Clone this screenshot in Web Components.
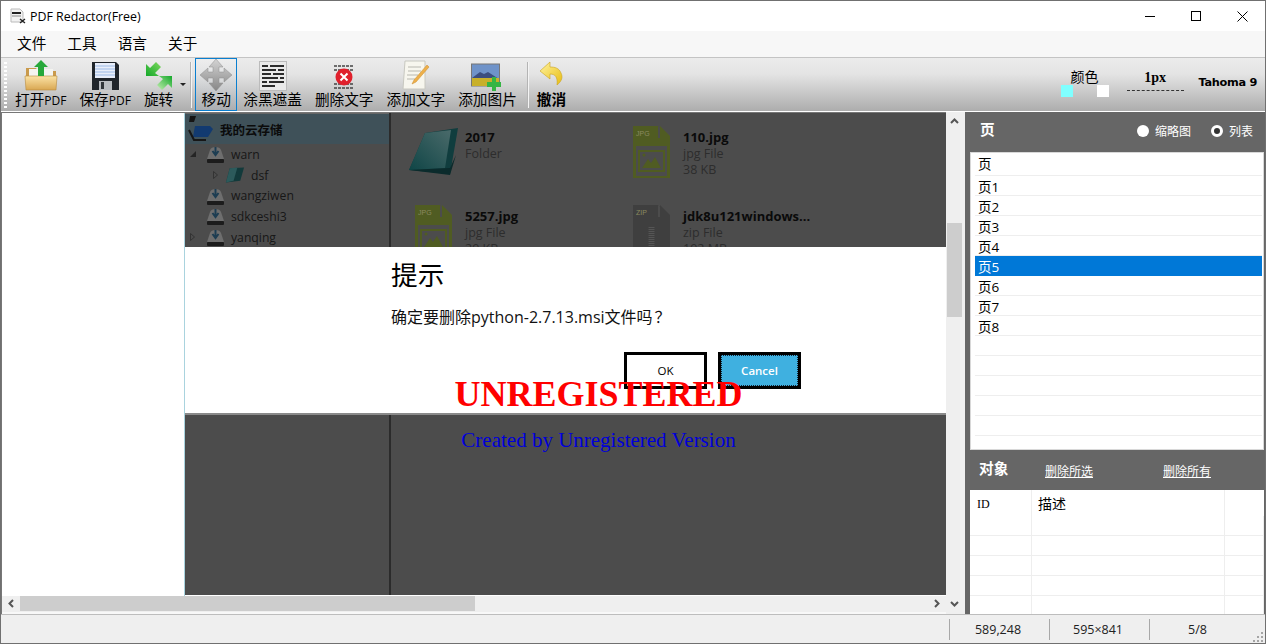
<!DOCTYPE html>
<html lang="zh">
<head>
<meta charset="utf-8">
<title>PDF Redactor(Free)</title>
<style>
  html, body { margin: 0; padding: 0; background: #efefef; overflow: hidden; }
  body { font-family: "Open Sans", "Noto Sans CJK SC", sans-serif; }
</style>
</head>
<body>
<pdf-window>
  <title-bar slot="title"></title-bar>
  <menu-bar slot="menu"></menu-bar>
  <tool-bar slot="tools">
    <tool-button label="打开" small="PDF">
      <svg width="34" height="31" viewBox="0 0 34 31">
        <defs><linearGradient id="fo" x1="0" y1="0" x2="0" y2="1"><stop offset="0" stop-color="#fbe3a6"/><stop offset="1" stop-color="#d9a752"/></linearGradient></defs>
        <path d="M2 8h10l2 3h18v19H2z" fill="#c99a4c"/>
        <rect x="5" y="9" width="24" height="10" fill="#f4f4f0"/>
        <path d="M1 16h32l-1 14H2z" fill="url(#fo)" stroke="#b98c3e" stroke-width=".6"/>
        <path d="M17 0l7 7h-4v9h-6V7h-4z" fill="#27a83a"/>
      </svg>
    </tool-button>
    <tool-button label="保存" small="PDF">
      <svg width="28" height="30" viewBox="0 0 28 30">
        <path d="M1 1h24l3 3v25H1z" fill="#20252b"/>
        <rect x="4" y="2" width="20" height="15" fill="#e8eefa"/>
        <path d="M4 5h20M4 8h20M4 11h20M4 14h20" stroke="#9cb9e6" stroke-width="1.2"/>
        <rect x="8" y="20" width="13" height="9" fill="#b9bdc2"/>
        <rect x="10" y="21" width="3" height="7" fill="#30353a"/>
      </svg>
    </tool-button>
    <tool-button label="旋转">
      <svg width="28" height="30" viewBox="0 0 28 30">
        <defs>
          <linearGradient id="g1" x1="0" y1="1" x2="1" y2="0"><stop offset="0" stop-color="#14a82a"/><stop offset="1" stop-color="#7ed85e"/></linearGradient>
          <linearGradient id="g2" x1="1" y1="0" x2="0" y2="1"><stop offset="0" stop-color="#14a82a"/><stop offset="1" stop-color="#c4efb0"/></linearGradient>
        </defs>
        <path d="M1 15V3l4 4 6-6 5 5-6 6 4 3z" fill="url(#g1)"/>
        <path d="M27 15v12l-4-4-6 6-5-5 6-6-4-3z" fill="url(#g2)"/>
      </svg>
    </tool-button>
    <drop-caret></drop-caret>
    <tool-separator></tool-separator>
    <tool-button label="移动" active>
      <svg width="32" height="32" viewBox="0 0 32 32">
        <defs><linearGradient id="mv" x1="0" y1="0" x2="0" y2="1"><stop offset="0" stop-color="#d4d4d4"/><stop offset="1" stop-color="#868686"/></linearGradient></defs>
        <path d="M16 0l7 8h-4v5h5V9l8 7-8 7v-4h-5v5h4l-7 8-7-8h4v-5H8v4l-8-7 8-7v4h5V8H9z" fill="url(#mv)" stroke="#8e8e8e" stroke-width=".5"/>
      </svg>
    </tool-button>
    <tool-button label="涂黑遮盖">
      <svg width="28" height="30" viewBox="0 0 28 30">
        <rect x=".5" y=".5" width="27" height="29" fill="#e9e9e9" stroke="#bbb"/>
        <path d="M3 5h6M11 5h14M3 9h14M19 9h6M3 13h9M14 13h11M3 17h16M21 17h4M3 21h5M10 21h15M3 25h13" stroke="#2b2b2b" stroke-width="2"/>
      </svg>
    </tool-button>
    <tool-button label="删除文字">
      <svg width="24" height="28" viewBox="0 0 24 28">
        <path d="M2 3h20M2 7h20M2 21h20M2 25h20" stroke="#444" stroke-width="1.6" stroke-dasharray="3 1"/>
        <circle cx="12" cy="14" r="8.500" fill="#e0202c"/>
        <path d="M8.500 10.500l7 7M15.500 10.500l-7 7" stroke="#fff" stroke-width="2"/>
      </svg>
    </tool-button>
    <tool-button label="添加文字">
      <svg width="28" height="32" viewBox="0 0 28 32">
        <path d="M3 2h20v28H1z" fill="#f7f6ee" stroke="#c8c8c0"/>
        <path d="M6 8h13M6 12h13M5 16h11M5 20h8" stroke="#b8b8b0"/>
        <path d="M25 6l2 2-13 15-4 2 2-4z" fill="#eeb04a" stroke="#c98a2a" stroke-width=".5"/>
      </svg>
    </tool-button>
    <tool-button label="添加图片">
      <svg width="32" height="28" viewBox="0 0 32 28">
        <rect x=".5" y="1" width="28" height="22" fill="#6f93c9" stroke="#777"/>
        <path d="M1 15l8-6 4 2 4-2 11 7v5H1z" fill="#3c4e7e"/>
        <rect x="1" y="15" width="27" height="8" fill="#c8b02a"/>
        <path d="M21 14h4v5h5v5h-5v4h-4v-4h-5v-5h5z" fill="#35b544"/>
      </svg>
    </tool-button>
    <tool-separator wide></tool-separator>
    <tool-button label="撤消" bold>
      <svg width="24" height="30" viewBox="0 0 24 30">
        <defs><linearGradient id="un" x1="0" y1="0" x2="1" y2="1"><stop offset="0" stop-color="#fff3a0"/><stop offset="1" stop-color="#e8bd10"/></linearGradient></defs>
        <path d="M11 1L1 10l10 8v-5c5 0 8 3 7 11 5-4 6-8 4-12-2-5-6-6-11-6z" fill="url(#un)" stroke="#c9a21e" stroke-width=".6"/>
      </svg>
    </tool-button>
    <tool-options slot="options"></tool-options>
  </tool-bar>
  <doc-view slot="doc">
    <explorer-tree>
      <tree-row level="0" arrow="open" name="warn"></tree-row>
      <tree-row level="1" arrow="closed" name="dsf" folder></tree-row>
      <tree-row level="0" name="wangziwen"></tree-row>
      <tree-row level="0" name="sdkceshi3"></tree-row>
      <tree-row level="0" arrow="closed" name="yanqing"></tree-row>
    </explorer-tree>
    <file-grid>
      <file-tile kind="folder" name="2017" type="Folder"></file-tile>
      <file-tile kind="jpg" name="110.jpg" type="jpg File" size="38 KB"></file-tile>
      <file-tile kind="jpg" name="5257.jpg" type="jpg File" size="29 KB"></file-tile>
      <file-tile kind="zip" name="jdk8u121windows..." type="zip File" size="192 MB"></file-tile>
    </file-grid>
    <confirm-dialog slot="over"></confirm-dialog>
    <water-mark slot="over"></water-mark>
  </doc-view>
  <side-panel slot="side"></side-panel>
  <status-bar slot="status"></status-bar>
</pdf-window>

<script>
const CJK = `"Open Sans", "Noto Sans CJK SC", sans-serif`;

// Outer window frame
class PdfWindow extends HTMLElement {
  constructor() {
    super();
    this.attachShadow({ mode: 'open' });
    this.shadowRoot.innerHTML = `
      <style>
        :host {
          display: flex; flex-direction: column; box-sizing: border-box;
          width: 1266px; height: 644px; border: 1px solid #707070; background: #efefef;
          font-family: ${CJK}; color: #000;
        }
        .main { flex: 0 0 502px; display: flex; min-height: 0; }
      </style>
      <slot name="title"></slot>
      <slot name="menu"></slot>
      <slot name="tools"></slot>
      <div class="main"><slot name="doc"></slot><slot name="side"></slot></div>
      <slot name="status"></slot>
    `;
  }
}

class TitleBar extends HTMLElement {
  constructor() {
    super();
    this.attachShadow({ mode: 'open' });
    this.shadowRoot.innerHTML = `
      <style>
        :host { display: flex; align-items: center; height: 30px; background: #fff; flex: none; }
        .icon { margin: 0 4px 0 9px; display: block; }
        .text { font-size: 12.4px; flex: 1; }
        .btn { width: 46px; height: 30px; display: flex; align-items: center; justify-content: center; }
      </style>
      <svg class="icon" width="16" height="16" viewBox="0 0 16 16">
        <path d="M1 1h9l3 3v10H1z" fill="#f2f2f2" stroke="#bbb"/>
        <path d="M2 5h9" stroke="#222" stroke-width="2"/>
        <path d="M2 8h9" stroke="#888"/>
        <path d="M10 11l5 4M15 11l-5 4" stroke="#222" stroke-width="1.4"/>
      </svg>
      <span class="text">PDF Redactor(Free)</span>
      <span class="btn"><svg width="10" height="10"><path d="M0 5.500h10" stroke="#000"/></svg></span>
      <span class="btn"><svg width="10" height="10"><rect x=".5" y=".5" width="9" height="9" fill="none" stroke="#000"/></svg></span>
      <span class="btn"><svg width="11" height="11"><path d="M.5.5l10 10M10.500.5l-10 10" stroke="#000"/></svg></span>
    `;
  }
}

class MenuBar extends HTMLElement {
  constructor() {
    super();
    this.attachShadow({ mode: 'open' });
    const items = ['文件', '工具', '语言', '关于'];
    this.shadowRoot.innerHTML = `
      <style>
        :host {
          display: flex; align-items: center; gap: 21px; height: 26px; flex: none; box-sizing: content-box;
          padding: 0 0 0 16px; background: #f7f7f7; border-bottom: 1px solid #c4c4c4;
          font-size: 14.67px;
        }
        span { position: relative; top: -2px; }
      </style>
      ${items.map(i => `<span>${i}</span>`).join('')}
    `;
  }
}

class ToolBar extends HTMLElement {
  constructor() {
    super();
    this.attachShadow({ mode: 'open' });
    this.shadowRoot.innerHTML = `
      <style>
        :host {
          display: flex; align-items: stretch; height: 54px; flex: none; box-sizing: border-box;
          background: linear-gradient(#ececec 0%, #e4e4e4 30%, #adadad 100%);
          border-bottom: 1px solid #fff; padding-left: 3px;
        }
        .grip {
          width: 3px; margin: 4px 2px 3px 0;
          background: repeating-linear-gradient(#fff 0 2px, transparent 2px 4px);
        }
        ::slotted([slot="options"]) { margin-left: auto; }
      </style>
      <div class="grip"></div>
      <slot></slot>
      <slot name="options"></slot>
    `;
  }
}

// One toolbar button: icon on top, label below
class ToolButton extends HTMLElement {
  constructor() {
    super();
    this.attachShadow({ mode: 'open' });
  }

  connectedCallback() {
    const small = this.getAttribute('small');
    this.shadowRoot.innerHTML = `
      <style>
        :host {
          display: flex; flex-direction: column; align-items: center; box-sizing: border-box;
          padding: 0 5px; border: 1px solid transparent; height: 53px; margin-right: 1px;
        }
        :host([active]) {
          border-color: #0a7fd0; margin: 0; padding: 0 4px;
          background: linear-gradient(rgba(255,255,255,.12), rgba(150,170,190,.18));
        }
        :host([bold]) .label { font-weight: 700; }
        .icon { height: 31px; display: flex; align-items: flex-end; justify-content: center; margin-top: 1px; }
        .label { font-size: 14.67px; line-height: 17px; white-space: nowrap; }
        .small { font-size: 12px; }
      </style>
      <div class="icon"><slot></slot></div>
      <div class="label">${this.getAttribute('label')}${small ? `<span class="small">${small}</span>` : ''}</div>
    `;
  }
}

class DropCaret extends HTMLElement {
  constructor() {
    super();
    this.attachShadow({ mode: 'open' });
    this.shadowRoot.innerHTML = `
      <style>
        :host { display: flex; width: 8px; align-items: flex-start; padding-top: 25px; }
        svg { display: block; }
      </style>
      <svg width="6" height="3"><path d="M0 0h6L3 3z" fill="#222"/></svg>
    `;
  }
}

class ToolSeparator extends HTMLElement {
  constructor() {
    super();
    this.attachShadow({ mode: 'open' });
    this.shadowRoot.innerHTML = `
      <style>
        :host { display: block; width: 1px; margin: 4px 3px 3px 3px; background: #f4f4f4; box-shadow: -1px 0 0 #b4b4b4; }
        :host([wide]) { margin: 4px 2px 3px 4px; }
      </style>
    `;
  }
}

// Colour, line width and font readout on the right end of the toolbar
class ToolOptions extends HTMLElement {
  constructor() {
    super();
    this.attachShadow({ mode: 'open' });
    this.shadowRoot.innerHTML = `
      <style>
        :host { display: flex; align-items: flex-start; height: 52px; }
        .color { width: 48px; margin-right: 18px; padding-top: 9px; text-align: center; font-size: 14px; line-height: 20px; }
        .swatches { display: flex; justify-content: space-between; margin-top: -2px; }
        .swatches i { display: block; width: 12px; height: 12px; }
        .line { width: 57px; margin-right: 15px; padding-top: 12px; text-align: center; font: 700 14px/15px "Liberation Serif", serif; }
        .line hr { margin: 5px 0 0; border: 0; border-top: 1px dashed #333; }
        .font { padding-top: 18px; margin-right: 8px; font: 700 11.3px/14px "DejaVu Sans", sans-serif; letter-spacing: -.3px; }
      </style>
      <div class="color">颜色
        <div class="swatches"><i style="background:#80ffff"></i><i style="background:#fff"></i></div>
      </div>
      <div class="line">1px<hr></div>
      <div class="font">Tahoma 9</div>
    `;
  }
}

// The scrolling page view, with both scrollbars
class DocView extends HTMLElement {
  constructor() {
    super();
    this.attachShadow({ mode: 'open' });
    this.shadowRoot.innerHTML = `
      <style>
        :host {
          display: grid; grid-template-columns: 944px 19px; grid-template-rows: 484px 18px;
          width: 963px; border-left: 1px solid #777; flex: none; background: #efefef;
        }
        .viewport { display: flex; background: #fff; border-top: 1px solid #777; }
        .margin { width: 182px; flex: none; border-right: 1px solid #a9d3de; background: #fff; }
        .page { position: relative; flex: 1; display: flex; background: #4c4c4c; height: 482px; overflow: hidden; }
        .thumb { background: #cdcdcd; }
        .v {
          grid-column: 2; grid-row: 1 / span 2; display: flex; flex-direction: column; align-items: center;
          background: #efefef; position: relative; padding-right: 3px;
        }
        .v .thumb { position: absolute; top: 111px; left: 1px; width: 15px; height: 94px; }
        .v svg { margin-top: 6px; }
        .v svg.down { margin-top: auto; margin-bottom: 7px; }
        .h { display: flex; align-items: flex-start; background: #efefef; height: 18px; box-sizing: border-box; border-bottom: 2px solid #f8f8f8; }
        .h .btn { width: 18px; height: 15px; display: flex; align-items: center; justify-content: center; flex: none; }
        .h .thumb { width: 455px; height: 15px; }
        .h .rest { flex: 1; }
        .tree-col { width: 204px; flex: none; border-right: 2px solid #2b2b2b; }
      </style>
      <div class="viewport">
        <div class="margin"></div>
        <div class="page">
          <div class="tree-col"><slot></slot></div>
          <slot name="over"></slot>
        </div>
      </div>
      <div class="v">
        <svg width="9" height="6"><path d="M1 5l3.500-3.500L8 5" fill="none" stroke="#555" stroke-width="2"/></svg>
        <div class="thumb"></div>
        <svg class="down" width="9" height="6"><path d="M1 1l3.500 3.500L8 1" fill="none" stroke="#555" stroke-width="2"/></svg>
      </div>
      <div class="h">
        <span class="btn"><svg width="6" height="9"><path d="M5 1L1.500 4.500 5 8" fill="none" stroke="#555" stroke-width="2"/></svg></span>
        <div class="thumb"></div>
        <div class="rest"></div>
        <span class="btn"><svg width="6" height="9"><path d="M1 1l3.500 3.500L1 8" fill="none" stroke="#555" stroke-width="2"/></svg></span>
      </div>
    `;
  }

  connectedCallback() {
    // the file grid sits beside the tree column, in the page
    this.querySelector('file-grid').setAttribute('slot', 'over');
  }
}

class ExplorerTree extends HTMLElement {
  constructor() {
    super();
    this.attachShadow({ mode: 'open' });
    this.shadowRoot.innerHTML = `
      <style>
        :host { display: block; }
        .head {
          display: flex; align-items: center; height: 31px; background: #3f5159; box-sizing: border-box;
          font-size: 12.5px; font-weight: 700; color: #0b0b0b; padding-left: 1px; border-top: 1px solid #666;
        }
        svg { margin-right: 6px; display: block; }
      </style>
      <div class="head">
        <svg width="28" height="29" viewBox="0 0 28 29">
          <path d="M4 1h6l-2 6H3z" fill="#151515"/>
          <path d="M9 11h15l3 3-5 8H7z" fill="#123a70"/>
          <path d="M3 15l5 10h12" fill="none" stroke="#161616" stroke-width="2"/>
        </svg>
        我的云存储
      </div>
      <slot></slot>
    `;
  }
}

class TreeRow extends HTMLElement {
  constructor() {
    super();
    this.attachShadow({ mode: 'open' });
  }

  connectedCallback() {
    const level = Number(this.getAttribute('level') || 0);
    const arrow = this.getAttribute('arrow');
    const isFolder = this.hasAttribute('folder');
    const arrowSvg = arrow === 'open'
      ? '<svg width="6" height="6"><path d="M6 0v6H0z" fill="#252525"/></svg>'
      : arrow === 'closed'
        ? '<svg width="5" height="8"><path d="M.5.5l4 3.500-4 3.500z" fill="none" stroke="#333"/></svg>'
        : '';
    const icon = isFolder
      ? `<svg width="20" height="18" viewBox="0 0 21 18"><path d="M5 2l15-1-4 14-15 2z" fill="#123a3b"/><path d="M5 2l8-1-4 14-8 2z" fill="#2c5a5b"/></svg>`
      : `<svg width="19" height="20" viewBox="0 0 19 20"><path d="M4 6C5 2 14 2 15 6l3 9H1z" fill="#6e6e6e"/><path d="M9.500 3v7M6.500 7l3 4 3-4" stroke="#1d3d52" stroke-width="2" fill="none"/><rect x="1" y="15" width="17" height="4" rx="1" fill="#1c1c1c"/></svg>`;
    this.shadowRoot.innerHTML = `
      <style>
        :host {
          display: flex; align-items: center; height: 20.7px; font-size: 12.2px; color: #171717;
          padding-left: ${level ? 23 : 0}px;
        }
        .arrow { width: 15px; flex: none; display: flex; justify-content: center; }
        .icon { width: ${isFolder ? 26 : 25}px; padding-left: ${isFolder ? 2 : 6}px; flex: none; display: flex; }
        svg { display: block; }
      </style>
      <span class="arrow">${arrowSvg}</span>
      <span class="icon">${icon}</span>
      <span>${this.getAttribute('name')}</span>
    `;
  }
}

class FileGrid extends HTMLElement {
  constructor() {
    super();
    this.attachShadow({ mode: 'open' });
    this.shadowRoot.innerHTML = `
      <style>
        :host {
          display: grid; grid-template-columns: 218px 225px; grid-auto-rows: 79px;
          padding: 13px 0 0 16px; flex: none;
        }
      </style>
      <slot></slot>
    `;
  }
}

class FileTile extends HTMLElement {
  constructor() {
    super();
    this.attachShadow({ mode: 'open' });
  }

  connectedCallback() {
    const kind = this.getAttribute('kind');
    const size = this.getAttribute('size');
    const colour = kind === 'jpg' ? '#505c22' : '#3f3f3f';
    const tag = kind === 'jpg' ? 'JPG' : 'ZIP';
    const inner = kind === 'jpg'
      ? `<rect x="3" y="20" width="31" height="30" fill="#4c4c4c"/><rect x="6" y="25" width="25" height="20" fill="none" stroke="#505c22" stroke-width="2"/><path d="M9 42l6-9 3 4 4-6 6 11z" fill="#505c22"/><circle cx="11" cy="29" r="1.500" fill="#505c22"/>`
      : `<path d="M18.500 22v26" stroke="#555" stroke-width="6" stroke-dasharray="1 1"/>`;
    const icon = kind === 'folder'
      ? `<svg width="50" height="52" viewBox="0 0 50 52" style="margin-left:1px">
           <defs><linearGradient id="fd" x1="0" y1="1" x2="1" y2="0"><stop offset="0" stop-color="#0f4546"/><stop offset="1" stop-color="#4a6a6a"/></linearGradient></defs>
           <path d="M17 7L50 2 42 48 1 44z" fill="#103d3e"/>
           <path d="M17 7l26-3-6 38-36 2z" fill="url(#fd)"/>
           <path d="M1 44l41 5 6-20-6 13z" fill="#0b2b2c"/>
         </svg>`
      : `<svg width="37" height="52" viewBox="0 0 37 52" style="margin-left:8px">
           <path d="M0 0h25l12 12v40H0z" fill="${colour}"/>
           <path d="M25 0v12h12z" fill="#4c4c4c"/><path d="M27 0l10 10v2H27z" fill="${colour}"/>
           ${inner}
           <text x="3" y="10" font-size="7" font-family="Liberation Sans, sans-serif" fill="#8a8a60">${tag}</text>
         </svg>`;
    this.shadowRoot.innerHTML = `
      <style>
        :host { display: flex; align-items: flex-start; }
        .icon { width: 58px; flex: none; }
        svg { display: block; }
        .text { padding-top: 3px; font-size: 12.5px; line-height: 16px; color: #2d2d2d; white-space: nowrap; }
        .name { font-weight: 700; font-size: 13px; line-height: 17px; color: #0a0a0a; }
      </style>
      <div class="icon">${icon}</div>
      <div class="text">
        <div class="name">${this.getAttribute('name')}</div>
        <div>${this.getAttribute('type')}</div>
        ${size ? `<div>${size}</div>` : ''}
      </div>
    `;
  }
}

// Modal shown on top of the page image
class ConfirmDialog extends HTMLElement {
  constructor() {
    super();
    this.attachShadow({ mode: 'open' });
    this.shadowRoot.innerHTML = `
      <style>
        :host {
          position: absolute; left: 0; right: 0; top: 134px; height: 166px;
          background: #fff; border-bottom: 2px solid #8a8a8a; padding: 0 0 0 206px; box-sizing: content-box;
          display: flex; flex-direction: column;
        }
        h2 { margin: 9px 0 0; font-size: 26.67px; line-height: 38px; font-weight: 400; }
        p { margin: 12px 0 0; font-size: 16px; line-height: 20px; color: #111; }
        .q { font-family: "Noto Sans CJK TC", sans-serif; margin-left: 2px; }
        .actions { display: flex; gap: 11px; margin: 25px 0 0 233px; }
        .btn {
          box-sizing: border-box; width: 83px; height: 37px; border: 3px solid #000; background: #fff;
          display: flex; align-items: center; justify-content: center; font-size: 11.5px;
        }
        .btn.primary { background: #3fb0e0; color: #fff; font-weight: 600; outline: 1px dotted #123; outline-offset: -4px; }
      </style>
      <h2>提示</h2>
      <p>确定要删除python-2.7.13.msi文件吗<span class="q">？</span></p>
      <div class="actions">
        <span class="btn">OK</span>
        <span class="btn primary">Cancel</span>
      </div>
    `;
  }
}

// Evaluation stamp drawn over the page
class WaterMark extends HTMLElement {
  constructor() {
    super();
    this.attachShadow({ mode: 'open' });
    this.shadowRoot.innerHTML = `
      <style>
        :host {
          position: absolute; left: 0; right: 0; top: 261px; display: flex; flex-direction: column;
          align-items: center; font-family: "Liberation Serif", serif; padding-left: 66px;
        }
        .a { color: #f00; font-weight: 700; font-size: 36px; line-height: 40px; }
        .b { color: #0000d8; font-size: 21px; line-height: 24px; margin-top: 14px; }
      </style>
      <div class="a">UNREGISTERED</div>
      <div class="b">Created by Unregistered Version</div>
    `;
  }
}

class SidePanel extends HTMLElement {
  constructor() {
    super();
    this.attachShadow({ mode: 'open' });
    const pages = ['页', '页1', '页2', '页3', '页4', '页5', '页6', '页7', '页8', '', '', '', '', ''];
    this.shadowRoot.innerHTML = `
      <style>
        :host {
          display: flex; flex-direction: column; flex: 1; min-width: 0; background: #666; color: #fff;
          font-size: 12px; padding-right: 1px;
        }
        .head { display: flex; align-items: center; height: 40px; flex: none; box-sizing: border-box; padding: 0 11px 2px 15px; }
        .head b { font-size: 14.67px; font-weight: 700; position: relative; top: -3px; }
        .radio { display: flex; align-items: center; gap: 6px; }
        .radio i { width: 12px; height: 12px; border-radius: 50%; background: #fff; display: block; box-sizing: border-box; }
        .radio i.on { border: 3px solid #fff; background: #333; }
        .radios { margin-left: auto; display: flex; gap: 20px; }
        .list { height: 298px; flex: none; margin-left: 5px; background: #fff; color: #000; overflow: hidden; padding: 2px 1px 0 4px; box-sizing: border-box; border: 1px solid #d8d8d8; }
        .row { height: 20px; box-sizing: border-box; border-bottom: 1px solid #eee; font-size: 13.5px; line-height: 22px; padding-left: 3px; }
        .row:first-child { height: 21px; line-height: 18px; }
        .row.sel { background: #0078d7; color: #fff; border-color: #0078d7; }
        .links { display: flex; align-items: center; height: 40px; flex: none; padding-left: 14px; }
        .links b { font-size: 14.67px; width: 66px; flex: none; position: relative; top: -3px; }
        .links u { font-size: 12px; flex: none; position: relative; top: 1px; }
        .links u.first { width: 118px; }
        .table {
          flex: 1; margin-left: 5px; background: #fff; color: #000; overflow: hidden;
          display: grid; grid-template-columns: 62px 193px 1fr; grid-template-rows: 26px repeat(5, 20px);
        }
        .table span { border-right: 1px solid #eee; border-bottom: 1px solid #eee; font-size: 14px; line-height: 27px; padding-left: 6px; box-sizing: border-box; }
        .table span.top { border-bottom: 0; }
        .table .id { font: 12px/28px "Liberation Serif", serif; padding-left: 7px; }
      </style>
      <div class="head">
        <b>页</b>
        <div class="radios">
          <span class="radio"><i></i>缩略图</span>
          <span class="radio"><i class="on"></i>列表</span>
        </div>
      </div>
      <div class="list">
        ${pages.map(p => `<div class="row${p === '页5' ? ' sel' : ''}">${p}</div>`).join('')}
      </div>
      <div class="links"><b>对象</b><u class="first">删除所选</u><u>删除所有</u></div>
      <div class="table">
        <span class="top id">ID</span><span class="top">描述</span><span class="top" style="border-right:0"></span>
        ${Array(15).fill('<span></span>').join('')}
      </div>
    `;
  }
}

class StatusBar extends HTMLElement {
  constructor() {
    super();
    this.attachShadow({ mode: 'open' });
    this.shadowRoot.innerHTML = `
      <style>
        :host {
          display: flex; align-items: center; justify-content: flex-end; flex: none; height: 29px; position: relative;
          background: #efefef; border-top: 1px solid #bdbdbd; box-sizing: border-box; font-size: 12.5px; color: #222;
        }
        .cell { width: 100px; height: 21px; border-left: 1px solid #a8a8a8; text-align: center; line-height: 21px; box-sizing: border-box; padding-right: 3px; }
        .cell.last { width: 116px; padding-right: 20px; }
        svg { position: absolute; right: 1px; bottom: 1px; }
      </style>
      <div class="cell">589,248</div>
      <div class="cell">595×841</div>
      <div class="cell last">5/8</div>
      <svg width="11" height="11"><path d="M8 1h2v2H8zM4 5h2v2H4zM8 5h2v2H8zM0 9h2v2H0zM4 9h2v2H4zM8 9h2v2H8z" fill="#a5a5a5"/></svg>
    `;
  }
}

customElements.define('pdf-window', PdfWindow);
customElements.define('title-bar', TitleBar);
customElements.define('menu-bar', MenuBar);
customElements.define('tool-bar', ToolBar);
customElements.define('tool-button', ToolButton);
customElements.define('drop-caret', DropCaret);
customElements.define('tool-separator', ToolSeparator);
customElements.define('tool-options', ToolOptions);
customElements.define('doc-view', DocView);
customElements.define('explorer-tree', ExplorerTree);
customElements.define('tree-row', TreeRow);
customElements.define('file-grid', FileGrid);
customElements.define('file-tile', FileTile);
customElements.define('confirm-dialog', ConfirmDialog);
customElements.define('water-mark', WaterMark);
customElements.define('side-panel', SidePanel);
customElements.define('status-bar', StatusBar);
</script>
</body>
</html>
